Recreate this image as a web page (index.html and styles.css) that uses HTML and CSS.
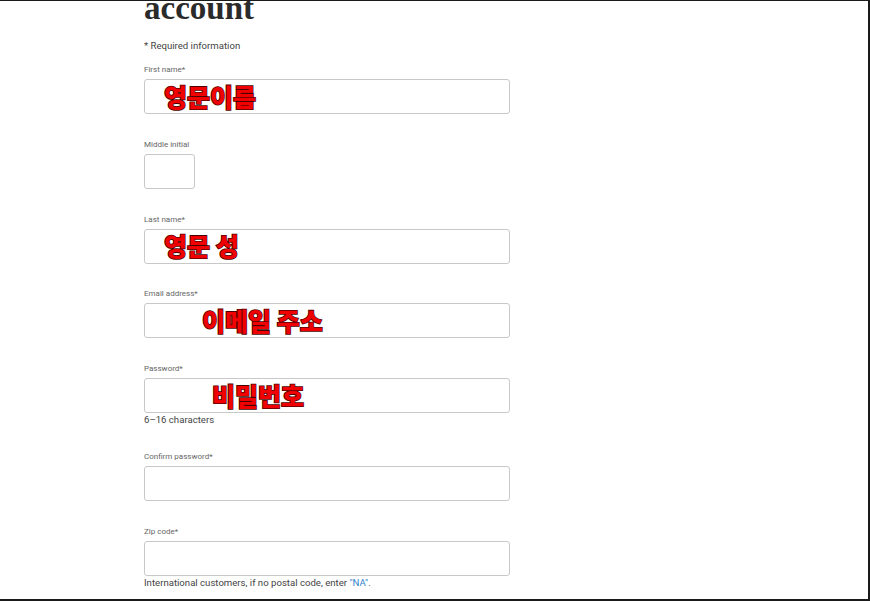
FILE: index.html
```html
<!DOCTYPE html>
<html lang="en">
<head>
  <meta charset="UTF-8">
  <title>Create account</title>
  <link rel="stylesheet" href="styles.css">
</head>
<body>

  <div class="frame">
    <div class="page">
      <h1>account</h1>
      <p class="required">* Required information</p>

      <form id="signupForm">
        <div class="field">
          <label for="first">First name*</label>
          <div class="box">
            <input type="text" id="first" />
            <span class="note" style="left: 20px">영문이름</span>
          </div>
        </div>

        <div class="field">
          <label for="middle">Middle initial</label>
          <div class="box small">
            <input type="text" id="middle" maxlength="1" />
          </div>
        </div>

        <div class="field">
          <label for="last">Last name*</label>
          <div class="box">
            <input type="text" id="last" />
            <span class="note" style="left: 20px">영문 성</span>
          </div>
        </div>

        <div class="field">
          <label for="email">Email address*</label>
          <div class="box">
            <input type="email" id="email" />
            <span class="note" style="left: 58px">이메일 주소</span>
          </div>
        </div>

        <div class="field">
          <label for="password">Password*</label>
          <div class="box">
            <input type="password" id="password" />
            <span class="note" style="left: 68px">비밀번호</span>
          </div>
          <div class="hint">6–16 characters</div>
        </div>

        <div class="field">
          <label for="confirm">Confirm password*</label>
          <div class="box">
            <input type="password" id="confirm" />
          </div>
        </div>

        <div class="field">
          <label for="zip">Zip code*</label>
          <div class="box">
            <input type="text" id="zip" />
          </div>
          <div class="hint">International customers, if no postal code, enter <a href="#">"NA"</a>.</div>
        </div>
      </form>
    </div>
  </div>

</body>
</html>
```

FILE: styles.css
```css
html, body {
  margin: 0;
  padding: 0;
  background: #fff;
}

body {
  font-family: Roboto, Arial, sans-serif;
  color: #333;
}

.frame {
  height: 601px;
  box-sizing: border-box;
  border-top: 1px solid #1a1a1a;
  border-right: 2px solid #1a1a1a;
  border-bottom: 2px solid #1a1a1a;
  overflow: hidden;
}

.page {
  padding-left: 144px;
  width: 366px;
}

h1 {
  font-family: "Liberation Serif", serif;
  font-size: 33px;
  font-weight: bold;
  line-height: 32px;
  color: #2b2b2b;
  margin: -9px 0 0 0;
}

.required {
  font-size: 9.6px;
  line-height: 13px;
  margin: 15px 0 0 0;
  color: #444;
}

form {
  margin-top: 13px;
}

.field {
  margin-bottom: 25.75px;
}

label {
  display: block;
  font-size: 8px;
  line-height: 10px;
  margin-bottom: 4px;
  color: #666;
}

.box {
  position: relative;
}

.box input {
  display: block;
  width: 100%;
  height: 35px;
  box-sizing: border-box;
  border: 1px solid #c8c8c8;
  border-radius: 3px;
  padding: 0 10px;
  font-size: 14px;
  background: #fff;
}

.box.small {
  width: 51px;
}

.note {
  position: absolute;
  top: 50%;
  transform: translateY(-52%);
  font-family: "Noto Sans CJK KR", sans-serif;
  font-size: 25px;
  font-weight: 900;
  line-height: 1;
  color: #f00000;
  -webkit-text-stroke: 1.6px #4a0000;
  paint-order: stroke fill;
  pointer-events: none;
}

.hint {
  font-size: 9.6px;
  line-height: 13px;
  color: #444;
}

.hint a {
  color: #2f7fc8;
  text-decoration: none;
}
```
